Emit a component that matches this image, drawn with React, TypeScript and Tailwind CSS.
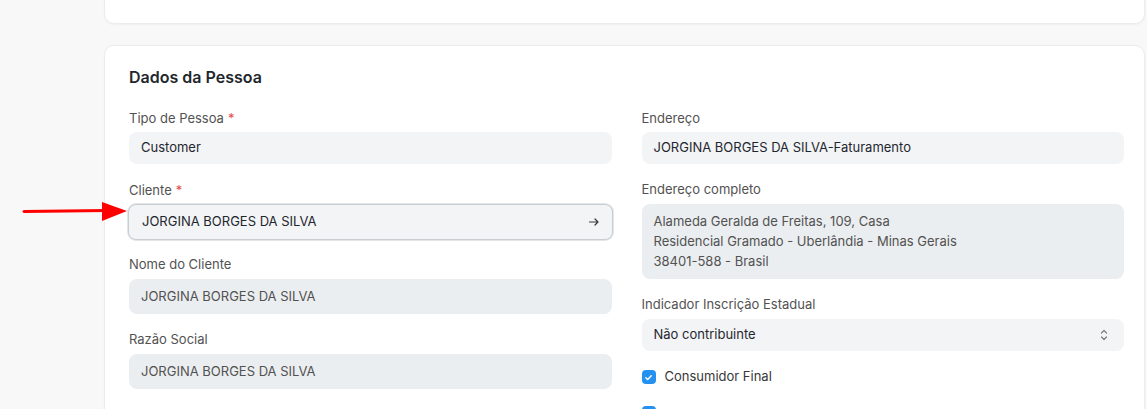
import React from 'react';

const font = { fontFamily: 'Inter, "Noto Sans", sans-serif' };

function Label({ text, required }: { text: string; required?: boolean }) {
    return (
        <div className="h-4 leading-4 text-[13px] text-[#525252] mb-[6px]">
            {text}
            {required && <span className="text-[#e24c4c] ml-1">*</span>}
        </div>
    );
}

function ReadOnly({ value }: { value: string }) {
    return (
        <div className="h-[35px] rounded-lg bg-[#ebeef0] px-3 flex items-center text-[13px] text-[#525252]">
            {value}
        </div>
    );
}

function Checkbox({ label }: { label?: string }) {
    return (
        <div className="flex items-center gap-[9px] h-5">
            <span className="w-[14px] h-[14px] rounded-[4px] bg-[#2490ef] flex items-center justify-center">
                <svg width="9" height="9" viewBox="0 0 10 10" fill="none">
                    <path d="M2 5.2L4.1 7.2L8 3" stroke="white" strokeWidth="1.6" strokeLinecap="round" strokeLinejoin="round" />
                </svg>
            </span>
            {label && <span className="text-[13px] text-[#383838]">{label}</span>}
        </div>
    );
}

export default function App() {
    return (
        <div className="relative w-[1147px] h-[409px] overflow-hidden bg-[#f8f8f8]" style={font}>
            <div className="ml-[104px] w-[1041px]">
                {/* previous section, cut off at the top */}
                <div className="-mt-[20px] h-[44px] rounded-[10px] bg-white border border-[#ececec] shadow-[0_1px_2px_rgba(0,0,0,0.04)]" />

                <div className="mt-[21px] rounded-[10px] bg-white border border-[#ececec] shadow-[0_1px_2px_rgba(0,0,0,0.04)] pt-[19px] pl-[24px] pr-[20px] pb-8">
                    <h2 className="text-[16px] leading-6 font-semibold text-[#1f272e]">Dados da Pessoa</h2>

                    <div className="grid grid-cols-2 gap-x-[30px] mt-[21px]">
                        {/* left column */}
                        <div className="flex flex-col">
                            <Label text="Tipo de Pessoa" required />
                            <div className="h-[32px] rounded-lg bg-[#f3f4f6] px-3 flex items-center text-[13px] text-[#1f272e]">
                                Customer
                            </div>

                            <div className="mt-[18px]">
                                <Label text="Cliente" required />
                                <div className="-mx-px h-[36px] rounded-lg bg-[#f3f4f6] border border-[#c8cdd1] shadow-[0_0_0_1px_#e3e6e8] pl-[13px] pr-3 flex items-center justify-between text-[13px] text-[#1f272e]">
                                    <span>JORGINA BORGES DA SILVA</span>
                                    <svg width="12" height="12" viewBox="0 0 12 12" fill="none">
                                        <path d="M1.5 6H10M7 3L10 6L7 9" stroke="#383838" strokeWidth="1.2" strokeLinecap="round" strokeLinejoin="round" />
                                    </svg>
                                </div>
                            </div>

                            <div className="mt-[16px]">
                                <div className="h-4 leading-4 text-[13px] text-[#525252] mb-[7px]">Nome do Cliente</div>
                                <ReadOnly value="JORGINA BORGES DA SILVA" />
                            </div>

                            <div className="mt-[17px]">
                                <div className="h-4 leading-4 text-[13px] text-[#525252] mb-[7px]">Razão Social</div>
                                <ReadOnly value="JORGINA BORGES DA SILVA" />
                            </div>
                        </div>

                        {/* right column */}
                        <div className="flex flex-col">
                            <Label text="Endereço" />
                            <div className="h-[32px] rounded-lg bg-[#f3f4f6] px-3 flex items-center text-[13px] text-[#1f272e]">
                                JORGINA BORGES DA SILVA-Faturamento
                            </div>

                            <div className="mt-[17px]">
                                <div className="h-4 leading-4 text-[13px] text-[#525252] mb-[7px]">Endereço completo</div>
                                <div className="h-[75px] rounded-lg bg-[#ebeef0] px-3 pt-[7px] text-[13px] leading-5 text-[#525252]">
                                    <div>Alameda Geralda de Freitas, 109, Casa</div>
                                    <div>Residencial Gramado - Uberlândia - Minas Gerais</div>
                                    <div>38401-588 - Brasil</div>
                                </div>
                            </div>

                            <div className="mt-[17px]">
                                <div className="h-4 leading-4 text-[13px] text-[#525252] mb-[7px]">Indicador Inscrição Estadual</div>
                                <div className="h-[32px] rounded-lg bg-[#f3f4f6] pl-3 pr-[15px] flex items-center justify-between text-[13px] text-[#1f272e]">
                                    <span>Não contribuinte</span>
                                    <svg width="10" height="14" viewBox="0 0 10 14" fill="none">
                                        <path d="M2.5 5L5 2.5L7.5 5M2.5 9L5 11.5L7.5 9" stroke="#7c7c7c" strokeWidth="1.2" strokeLinecap="round" strokeLinejoin="round" />
                                    </svg>
                                </div>
                            </div>

                            <div className="mt-[16px] flex flex-col gap-[16px]">
                                <Checkbox label="Consumidor Final" />
                                <Checkbox />
                            </div>
                        </div>
                    </div>
                </div>
            </div>

            {/* red annotation arrow */}
            <svg className="absolute left-[22px] top-[200px]" width="108" height="24" viewBox="0 0 108 24">
                <path d="M2 11.5L84 10.5" stroke="#ff0000" strokeWidth="3" strokeLinecap="round" />
                <path d="M80 2L105 11L80 21Z" fill="#ff0000" />
            </svg>
        </div>
    );
}
